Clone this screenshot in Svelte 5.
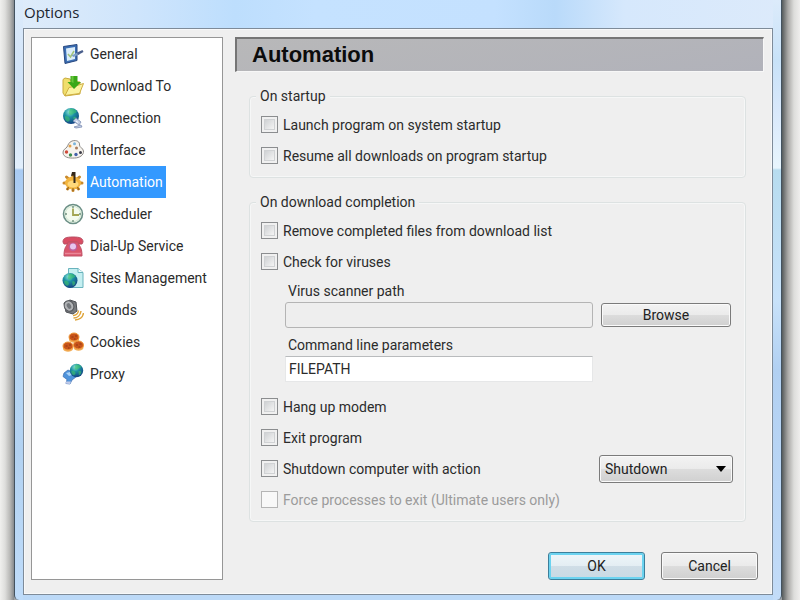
<script>
  const pages = [
    'General', 'Download To', 'Connection', 'Interface', 'Automation', 'Scheduler',
    'Dial-Up Service', 'Sites Management', 'Sounds', 'Cookies', 'Proxy'
  ];
  let current = $state('Automation');
  let action = $state('Shutdown');
  let parameters = $state('FILEPATH');
  let scanner = $state('');
</script>

{#snippet check(text, disabled = false)}
  <label class="check" class:disabled>
    <input type="checkbox" {disabled} />
    <span>{text}</span>
  </label>
{/snippet}

{#snippet globe(cx, cy, r)}
  <circle {cx} {cy} {r} fill="url(#globe)" />
  <path
    transform="translate({cx - r} {cy - r}) scale({r / 7})"
    d="M6 1c2-.8 5 .2 6 2-1 2-3 1-4 3-2 .5-3-.4-3-2zM2 7c2 0 4 1 4 3 0 1-1 2-2 2-2-1-3-3-2-5zM9 8c2-1 3 0 3 1s-1 3-2.500 3z"
    fill="#3fc46c" opacity=".6" />
{/snippet}

{#snippet icon(name)}
  <svg class="icon" viewBox="0 0 22 22" aria-hidden="true">
    {#if name === 'General'}
      <path d="M1.500 3.500 15 1.500v16L3 20.500z" fill="#3c6fb4" stroke="#27477f" />
      <path d="M4 5.500 13 4v12l-8 2z" fill="#dceefb" />
      <path d="m6 11 2.500 3L12 8" fill="none" stroke="#a3c479" stroke-width="1.500" />
      <path d="m9.500 12.500 7-3.500 1.500 2-6.500 3z" fill="#7f9fc4" />
      <path d="m15 9.500 5.500-2.500 1 2-5.500 3z" fill="#4a5f8c" />
    {:else if name === 'Download To'}
      <path d="M1 4.500 3 3l5 1 1 2 9 1v12L3 21l-2-3z" fill="#f0de6c" stroke="#c9ab3e" />
      <path d="m3 20.500 4-8 5-1 9.500-3-4 10z" fill="#fbf3a0" stroke="#cfae42" />
      <path d="M8.500 1h7v6h3.500l-7 7-6.500-7h3z" fill="#39a818" />
      <path d="M9.500 1h2v7l-2-1z" fill="#69c63c" />
    {:else if name === 'Connection'}
      {@render globe(9, 9, 8)}
      <path d="m11 14 3-3 5 4-2 3zM12 20l7-2 1 2-6 1z" fill="#c3cfe6" stroke="#7c8db3" stroke-width=".8" />
      <path d="m14 14 2 1.500" stroke="#fff" />
    {:else if name === 'Interface'}
      <path
        d="M10 2c5-1.500 8 1 7.500 4-.3 2 3.500 3 4 6 .5 4-4 7-9 7-6 .5-11-1-11.500-5C.6 10.500 4 9.500 5 8c1-2 2-5 5-6z"
        fill="#f6f3ee" stroke="#8e8a86" />
      <circle cx="4.500" cy="13" r="1.700" fill="#cf4a3a" />
      <circle cx="8" cy="7" r="1.500" fill="#e0a04a" />
      <circle cx="12.500" cy="4.800" r="1.500" fill="#7ab4dc" />
      <circle cx="8.500" cy="16" r="1.700" fill="#3a8d4d" />
      <circle cx="14.500" cy="9" r="1.500" fill="#aa7d5c" />
      <circle cx="14" cy="15.500" r="1.700" fill="#4461a8" />
      <circle cx="18.500" cy="13.500" r="1.500" fill="#3b3b46" />
    {:else if name === 'Automation'}
      <g stroke="#c98a2c" stroke-width="3" stroke-linecap="round">
        <path d="M11 12V4M11 12v7.500M11 12h9M11 12H2M11 12 4.500 6M11 12l6.500-6M11 12l-5.500 6M11 12l5.500 6" />
      </g>
      <ellipse cx="11" cy="12" rx="8" ry="6.500" fill="#f3b53f" />
      <ellipse cx="11" cy="13" rx="5.500" ry="3.500" fill="#ffd87a" />
      <path d="m5 19 1.500-3M11 20v-3M17 19l-1.500-3" stroke="#8b5a18" />
      <path d="M10 1h3.500v11h-2V4.500L9 5z" fill="#33281a" />
    {:else if name === 'Scheduler'}
      <circle cx="11" cy="11" r="9.500" fill="#f4fbef" stroke="#6b8f86" stroke-width="1.600" />
      <circle cx="11" cy="11" r="7.700" fill="none" stroke="#cfe5d2" />
      <path d="M11 3v2M11 17v2M3 11h2M17 11h2" stroke="#71917f" stroke-width="1.400" />
      <path d="M11 5.500V12h6" fill="none" stroke="#a3a553" stroke-width="1.800" />
    {:else if name === 'Dial-Up Service'}
      <path d="M1 7c0-4 3-5 10-5s10 1 10 5l-1 2h-5V7H7v2H2z" fill="#d94d63" stroke="#b85064" />
      <path d="M6 7h10l1 3c2.500 3 3 6 3 11H2c0-5 .5-8 3-11z" fill="#d9566c" stroke="#c05266" />
      <circle cx="11" cy="12" r="4.300" fill="#c0609a" />
      <circle cx="11" cy="11.500" r="3" fill="#e7c7ee" />
      <path d="M3 18.500h16" stroke="#e98797" stroke-width="1.500" />
    {:else if name === 'Sites Management'}
      <path d="M6.500 1.500H16l5 4v15H6.500z" fill="#c5eff1" stroke="#69b3bd" />
      <path d="M16 1.500v4h5" fill="#eefcfc" stroke="#69b3bd" />
      {@render globe(8, 13.5, 7.5)}
    {:else if name === 'Sounds'}
      <path d="m2 4 6-3 6 2 1 9-4 3-7-2z" fill="#777a7e" stroke="#4f5256" />
      <ellipse cx="7" cy="7" rx="4.700" ry="5.500" transform="rotate(-30 7 7)" fill="#b2b4b7" stroke="#55585c" />
      <ellipse cx="7" cy="7" rx="2" ry="3" transform="rotate(-30 7 7)" fill="#74787c" />
      <path d="M11 16.500c3 0 5-2 5.500-5M11.500 19c4 0 7-3 7.500-7M13 21c5-.500 8-3.500 8.500-7" fill="none" stroke="#dfa53b" stroke-width="1.500" />
    {:else if name === 'Cookies'}
      {#each [[12, 6], [6, 15], [16.5, 14]] as [x, y]}
        <path d="M{x - 5} {y}v3c1 3.500 9 3.500 10 0v-3z" fill="#f2ae58" />
        <ellipse cx={x} cy={y} rx="5" ry="4" fill="#c9541a" stroke="#f09a3c" />
        <path d="M{x - 2.5} {y}h2M{x + 1} {y - 1}h2M{x} {y + 2}h1.500" stroke="#8f3a12" stroke-width="1.200" />
      {/each}
    {:else}
      <path d="m2 10 4-3 6 3 2 4-4 3-2 4-4-.500 1-4-4-3z" fill="#4f93db" stroke="#3c6cae" stroke-width=".700" />
      <path d="m4 10 4-1 2 3-3 1z" fill="#a9d2f7" />
      <path d="M4 18.500h5l-1 2.500-5-.500z" fill="#c3cbe8" />
      {@render globe(14.5, 7.5, 6.7)}
    {/if}
  </svg>
{/snippet}

<div class="desktop">
  <svg class="defs" aria-hidden="true">
    <defs>
      <radialGradient id="globe" cx=".4" cy=".25" r=".8">
        <stop offset="0" stop-color="#8fe3d6" />
        <stop offset=".4" stop-color="#1d93a4" />
        <stop offset="1" stop-color="#123a80" />
      </radialGradient>
    </defs>
  </svg>
  <main class="window">
    <header class="title">Options</header>
    <div class="client">
      <nav aria-label="Option pages">
        {#each pages as page}
          <button class="page" class:selected={page === current} onclick={() => (current = page)}>
            {@render icon(page)}
            <span>{page}</span>
          </button>
        {/each}
      </nav>

      <section class="panel">
        <h1>Automation</h1>
        <div class="groups">
          <fieldset>
            <legend>On startup</legend>
            {@render check('Launch program on system startup')}
            {@render check('Resume all downloads on program startup')}
          </fieldset>

          <fieldset>
            <legend>On download completion</legend>
            {@render check('Remove completed files from download list')}
            {@render check('Check for viruses')}
            <div class="scanner">
              <label for="path">Virus scanner path</label>
              <input id="path" type="text" bind:value={scanner} disabled />
              <button class="push">Browse</button>
              <label class="second" for="params">Command line parameters</label>
              <input id="params" type="text" bind:value={parameters} />
            </div>
            {@render check('Hang up modem')}
            {@render check('Exit program')}
            <div class="action">
              {@render check('Shutdown computer with action')}
              <div class="combo">
                <select aria-label="Shutdown action" bind:value={action}>
                  <option>Shutdown</option>
                </select>
                <svg viewBox="0 0 10 6" aria-hidden="true"><path d="M0 0h10L5 6z" /></svg>
              </div>
            </div>
            {@render check('Force processes to exit (Ultimate users only)', true)}
          </fieldset>
        </div>
        <footer>
          <button class="push default">OK</button>
          <button class="push">Cancel</button>
        </footer>
      </section>
    </div>
  </main>
</div>

<style>
  :global(body) {
    margin: 0;
  }
  .desktop {
    box-sizing: border-box;
    height: 100vh;
    min-height: 600px;
    overflow: hidden;
    padding: 0 18px 0 14px;
    background:
      linear-gradient(90deg, #f0f0ee, #dededc 5px, #b8b8b6 10px, #85898d 14px) left / 14px 100% no-repeat,
      linear-gradient(270deg, #efeeed, #dddddb 6px, #aaa9a7 12px, #565b5c 18px) right / 18px 100% no-repeat,
      #a0a4a8;
    font: 14px/18px Roboto, 'Liberation Sans', sans-serif;
    color: #2b2b2b;
  }
  .defs {
    position: absolute;
    width: 0;
    height: 0;
  }
  .window {
    box-sizing: border-box;
    display: flex;
    flex-direction: column;
    height: 100%;
    padding: 0 8px 5px;
    border: solid #43525f;
    border-width: 0 1px;
    border-radius: 0 0 5px 5px;
    background:
      linear-gradient(#dcebfb, #cfe2f8 100px, #e2effc 168px, #a9cbf3 170px, #bcdcf8 300px, #b2d2f2 450px, #bfdcfa) left / 8px 100% no-repeat,
      linear-gradient(#dcebfb, #c8e2f8 60px, #d8e8fb 110px, #e8f5fd 168px, #b7dcef 170px, #c8e2fa 300px, #b1d0f2 370px, #c3dcf8) right / 8px 100% no-repeat,
      linear-gradient(#b9d9f800 590px, #bcd9f7 592px),
      linear-gradient(90deg, #dfecfa, #cfe5fc 120px, #bddefd 220px, #c5e2ff 300px, #c4e1ff 480px, #b9dafa 540px, #d6e8fc 610px, #dceafb);
  }
  .title {
    height: 28px;
    box-sizing: border-box;
    padding: 0 1px;
    font: 15px/24px 'Open Sans', 'Noto Sans', sans-serif;
    color: #1c2630;
  }
  .client {
    flex: 1;
    display: flex;
    gap: 12px;
    box-sizing: border-box;
    padding: 8px 8px 14px 7px;
    border: 1px solid #7e8b99;
    background: #efefef;
    box-shadow: inset 0 0 0 1px #f7f8f9;
  }
  nav {
    flex: 0 0 190px;
    border: 1px solid #969696;
    background: #fff;
  }
  .page {
    display: flex;
    align-items: center;
    gap: 3px;
    height: 32px;
    margin: 0 0 0 30px;
    padding: 0;
    border: 0;
    background: none;
    font: inherit;
    color: inherit;
    white-space: nowrap;
  }
  .page span {
    padding: 0 3px;
    line-height: 32px;
  }
  .page.selected span {
    background: #3399ff;
    color: #fff;
  }
  .icon {
    width: 22px;
    height: 22px;
  }
  .panel {
    flex: 1;
    display: flex;
    flex-direction: column;
    min-width: 0;
  }
  h1 {
    margin: 0;
    padding-left: 15px;
    border: solid #757575;
    border-width: 2px 1px 1px 2px;
    border-right-color: #f7f7f7;
    border-bottom-color: #f7f7f7;
    background: linear-gradient(170deg, #b8b8b9, #b1b2ba);
    font: bold 22px/32px 'Liberation Sans', Arial, sans-serif;
    color: #0c0c0c;
  }
  .groups {
    display: flex;
    flex-direction: column;
    gap: 15px;
    padding: 15px 18px 0 14px;
  }
  fieldset {
    min-width: 0;
    margin: 0;
    padding: 4px 11px 6px;
    border: 1px solid #dde2e2;
    border-radius: 4px;
    box-shadow: inset 0 0 0 1px #f6f7f7;
  }
  legend {
    margin-left: -5px;
    padding: 0 4px;
    background: #efefef;
  }
  .check {
    display: flex;
    align-items: center;
    gap: 5px;
    height: 31px;
  }
  .check.disabled {
    color: #9b9b9b;
  }
  .check input {
    appearance: none;
    box-sizing: border-box;
    flex: none;
    width: 17px;
    height: 17px;
    margin: 0;
    border: 1px solid #8b8d8f;
    background: linear-gradient(135deg, #c3c6c9, #f4f4f4 80%);
    box-shadow: inset 0 0 0 2px #f0f0f0, inset 0 0 0 3px #d0d2d4;
  }
  .check input:checked {
    background: #35528c;
  }
  .check.disabled input {
    border-color: #b5b5b5;
    background: #f8f8f8;
    box-shadow: none;
  }
  .scanner {
    display: grid;
    grid-template-columns: 1fr 130px;
    column-gap: 8px;
    padding: 3px 3px 9px 24px;
  }
  .scanner label {
    grid-column: 1 / -1;
    padding-left: 3px;
    line-height: 22px;
  }
  .scanner .second {
    margin-top: 6px;
  }
  .scanner input {
    box-sizing: border-box;
    width: 100%;
    height: 26px;
    min-width: 0;
    padding: 0 3px;
    border: 1px solid #e6e7e8;
    border-top-color: #b9bbbd;
    background: #fff;
    font: inherit;
    color: inherit;
  }
  .scanner input:disabled {
    border: 1px solid #b4b4b4;
    border-radius: 3px;
    background: #eeeeee;
  }
  .push,
  select {
    box-sizing: border-box;
    border: 1px solid #7b7b7b;
    border-radius: 3px;
    background: linear-gradient(#f3f3f3, #ebebeb 48%, #dcdcdc 52%, #d0d0d0);
    box-shadow: inset 0 0 0 1px #fafafa;
    font: inherit;
    color: #222;
  }
  .scanner .push {
    align-self: center;
    height: 24px;
    padding: 0;
  }
  .action {
    display: flex;
    align-items: center;
    justify-content: space-between;
    padding-right: 1px;
  }
  .combo {
    position: relative;
    width: 134px;
  }
  select {
    appearance: none;
    display: block;
    width: 100%;
    height: 28px;
    padding: 0 5px;
  }
  .combo svg {
    position: absolute;
    right: 7px;
    top: 11px;
    width: 10px;
    height: 6px;
    pointer-events: none;
  }
  footer {
    display: flex;
    justify-content: flex-end;
    gap: 16px;
    margin-top: auto;
    padding-right: 6px;
  }
  footer .push {
    width: 97px;
    height: 28px;
    padding: 0;
  }
  .push.default {
    border-color: #3c7f9b;
    background: linear-gradient(#eef6f9, #e4eef3 48%, #cfdde6 52%, #c8dae4);
    box-shadow: inset 0 0 0 2px #6bd3f0;
  }
</style>
